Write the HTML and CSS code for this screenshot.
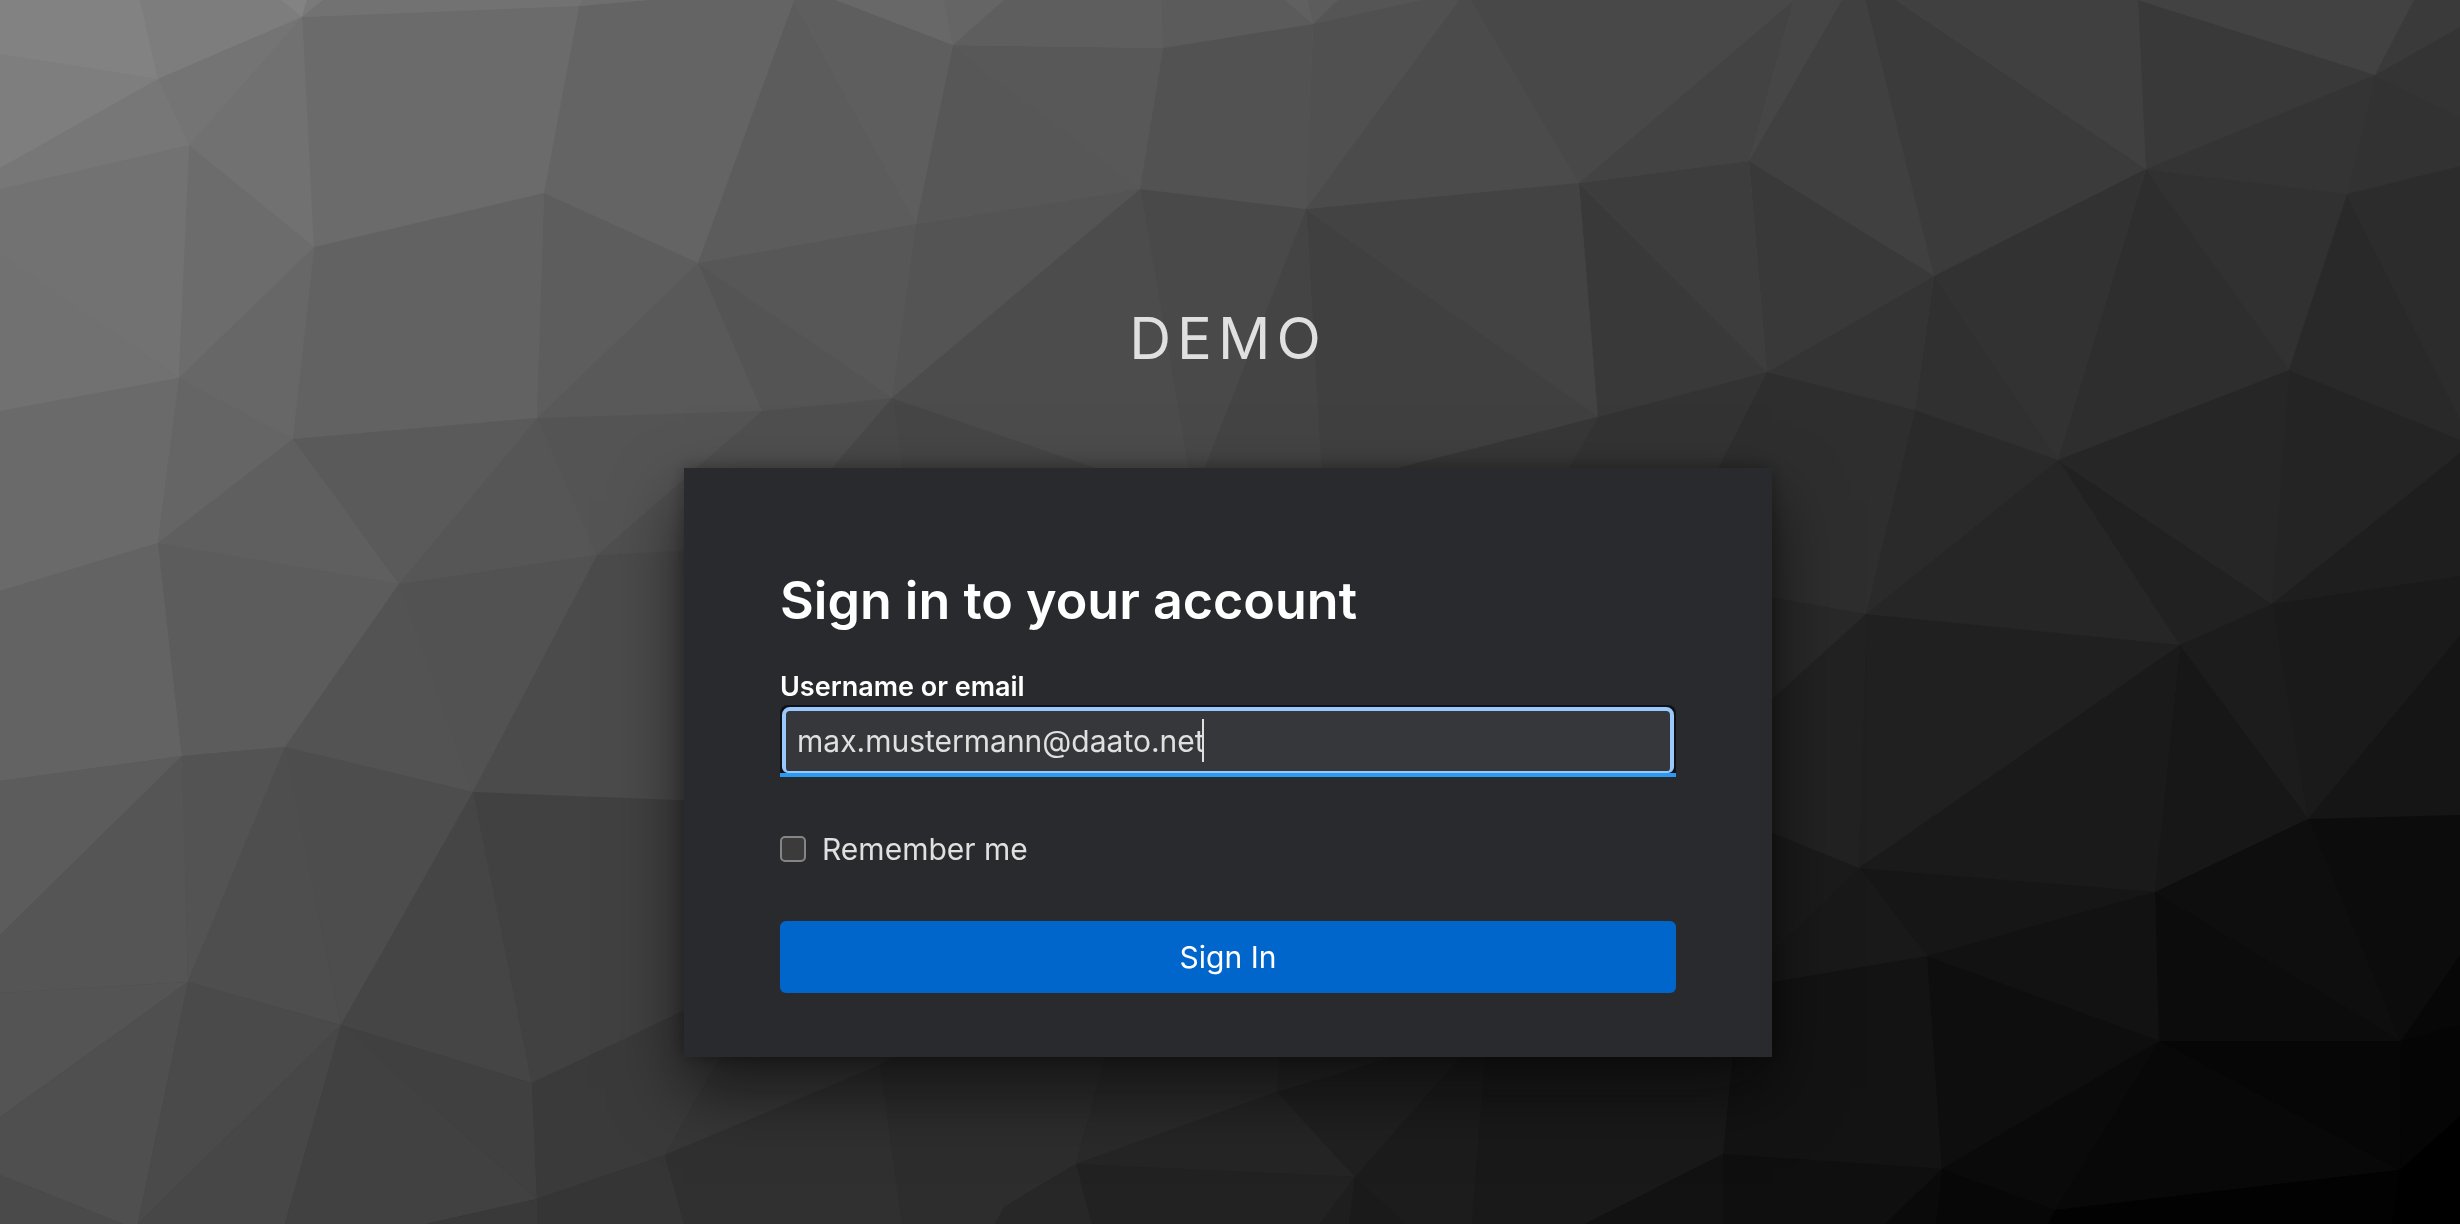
FILE: index.html
```html
<!DOCTYPE html>
<html lang="en">
<head>
    <meta charset="UTF-8">
    <meta name="viewport" content="width=device-width, initial-scale=1.0">
    <title>Sign in to DEMO</title>
    <link rel="stylesheet" href="styles.css">
</head>
<body>
    <!-- Low-poly backdrop -->
    <svg class="backdrop" viewBox="0 0 2460 1224" preserveAspectRatio="xMidYMid slice" aria-hidden="true">
        <defs>
            <linearGradient id="base" x1="0" y1="0" x2="1" y2="1">
                <stop offset="0" stop-color="#868686"/>
                <stop offset="0.5" stop-color="#424242"/>
                <stop offset="1" stop-color="#000000"/>
            </linearGradient>
        </defs>
        <rect width="2460" height="1224" fill="url(#base)"/>
        <!-- Top left -->
        <polygon fill="#828282" points="0,0 140,0 158,79 0,54"/>
        <polygon fill="#7d7d7d" points="140,0 281,0 302,17 158,79"/>
        <polygon fill="#838383" points="281,0 307,0 302,17"/>
        <polygon fill="#7a7a7a" points="307,0 323,0 302,17"/>
        <polygon fill="#7e7e7e" points="0,54 158,79 0,168"/>
        <polygon fill="#777777" points="0,168 158,79 189,145 0,189"/>
        <polygon fill="#747474" points="158,79 302,17 189,145"/>
        <polygon fill="#717171" points="302,17 314,247 189,145"/>
        <polygon fill="#727272" points="323,0 583,0 579,6 302,17"/>
        <polygon fill="#6e6e6e" points="583,0 649,0 579,6"/>
        <polygon fill="#6b6b6b" points="302,17 579,6 544,193 314,247"/>
        <polygon fill="#646464" points="579,6 649,0 794,0 698,263 544,193"/>
        <polygon fill="#727272" points="0,189 189,145 179,378 0,254"/>
        <polygon fill="#717171" points="0,254 179,378 0,411"/>
        <polygon fill="#6c6c6c" points="189,145 314,247 179,378"/>
        <polygon fill="#676767" points="314,247 293,439 179,378"/>
        <polygon fill="#626262" points="314,247 544,193 537,418 293,439"/>
        <polygon fill="#5d5d5d" points="544,193 698,263 537,418"/>
        <polygon fill="#5c5c5c" points="794,0 916,224 698,263"/>
        <polygon fill="#5e5e5e" points="794,0 836,0 953,45 916,224"/>
        <polygon fill="#595959" points="698,263 762,411 537,418"/>
        <polygon fill="#6a6a6a" points="0,411 179,378 158,543 0,591"/>
        <polygon fill="#656565" points="179,378 293,439 158,543"/>
        <polygon fill="#5f5f5f" points="293,439 399,584 158,543"/>
        <polygon fill="#5a5a5a" points="293,439 537,418 399,584"/>
        <polygon fill="#565656" points="537,418 597,555 399,584"/>
        <polygon fill="#545454" points="537,418 762,411 597,555"/>
        <!-- Top middle -->
        <polygon fill="#575757" points="698,263 916,224 892,398"/>
        <polygon fill="#545454" points="698,263 892,398 762,411"/>
        <polygon fill="#545454" points="916,224 1140,189 892,398"/>
        <polygon fill="#575757" points="916,224 953,45 1140,189"/>
        <polygon fill="#585858" points="953,45 1163,48 1140,189"/>
        <polygon fill="#4f4f4f" points="762,411 892,398 830,500 684,551 597,555"/>
        <polygon fill="#686868" points="836,0 944,0 953,45"/>
        <polygon fill="#656565" points="944,0 1004,0 953,45"/>
        <polygon fill="#5e5e5e" points="1004,0 1161,0 1163,48 953,45"/>
        <polygon fill="#5b5b5b" points="1161,0 1285,0 1313,24 1163,48"/>
        <polygon fill="#606060" points="1285,0 1308,0 1313,24"/>
        <polygon fill="#5c5c5c" points="1308,0 1338,0 1313,24"/>
        <polygon fill="#555555" points="1338,0 1421,0 1313,24"/>
        <polygon fill="#525252" points="1163,48 1313,24 1306,209 1140,189"/>
        <polygon fill="#505050" points="1313,24 1421,0 1459,0 1306,209"/>
        <polygon fill="#4b4b4b" points="1459,0 1470,0 1579,183 1306,209"/>
        <polygon fill="#484848" points="1470,0 1794,0 1579,183"/>
        <polygon fill="#4c4c4c" points="1140,189 1191,480 1130,480 892,398"/>
        <polygon fill="#494949" points="1140,189 1306,209 1200,480 1191,480"/>
        <polygon fill="#444444" points="1306,209 1322,480 1200,480"/>
        <polygon fill="#404040" points="1306,209 1598,417 1350,480 1322,480"/>
        <polygon fill="#434343" points="1306,209 1579,183 1598,417"/>
        <polygon fill="#484848" points="892,398 904,480 822,480"/>
        <polygon fill="#464646" points="892,398 1130,480 904,480"/>
        <polygon fill="#373737" points="1598,417 1562,480 1350,480"/>
        <!-- Top right -->
        <polygon fill="#434343" points="1579,183 1794,0 1749,161"/>
        <polygon fill="#464646" points="1794,0 1842,0 1749,161"/>
        <polygon fill="#404040" points="1842,0 1865,0 1934,276 1749,161"/>
        <polygon fill="#3b3b3b" points="1865,0 1896,0 2146,169 1934,276"/>
        <polygon fill="#404040" points="1896,0 2138,0 2146,169"/>
        <polygon fill="#393939" points="2138,0 2375,75 2146,169"/>
        <polygon fill="#424242" points="2138,0 2414,0 2375,75"/>
        <polygon fill="#3a3a3a" points="2414,0 2460,0 2460,27 2375,75"/>
        <polygon fill="#343434" points="2375,75 2460,27 2460,117"/>
        <polygon fill="#323232" points="2375,75 2460,117 2460,166 2347,194"/>
        <polygon fill="#343434" points="2375,75 2347,194 2146,169"/>
        <polygon fill="#313131" points="2146,169 2347,194 2289,370"/>
        <polygon fill="#292929" points="2347,194 2460,420 2460,440 2289,370"/>
        <polygon fill="#2c2c2c" points="2347,194 2460,166 2460,420"/>
        <polygon fill="#2e2e2e" points="2146,169 2289,370 2058,460"/>
        <polygon fill="#323232" points="2146,169 2058,460 1934,276"/>
        <polygon fill="#303030" points="1934,276 2058,460 1915,410"/>
        <polygon fill="#343434" points="1934,276 1915,410 1767,372"/>
        <polygon fill="#393939" points="1749,161 1934,276 1767,372"/>
        <polygon fill="#3d3d3d" points="1579,183 1749,161 1767,372"/>
        <polygon fill="#393939" points="1579,183 1767,372 1598,417"/>
        <polygon fill="#333333" points="1598,417 1767,372 1712,480 1562,480"/>
        <polygon fill="#2e2e2e" points="1767,372 1915,410 1866,614 1760,595 1712,480"/>
        <polygon fill="#2a2a2a" points="1915,410 2058,460 1866,614"/>
        <polygon fill="#262626" points="2058,460 2180,645 1866,614"/>
        <polygon fill="#212121" points="2058,460 2272,604 2180,645"/>
        <polygon fill="#262626" points="2058,460 2289,370 2272,604"/>
        <polygon fill="#242424" points="2289,370 2460,440 2460,453 2272,604"/>
        <polygon fill="#1e1e1e" points="2272,604 2460,453 2460,576"/>
        <!-- Bottom right -->
        <polygon fill="#1a1a1a" points="2272,604 2460,576 2460,635 2308,819"/>
        <polygon fill="#1c1c1c" points="2272,604 2308,819 2180,645"/>
        <polygon fill="#151515" points="2308,819 2460,635 2460,815"/>
        <polygon fill="#292929" points="1760,595 1866,614 1760,710"/>
        <polygon fill="#222222" points="1866,614 1859,868 1760,828 1760,710"/>
        <polygon fill="#202020" points="1866,614 2180,645 1859,868"/>
        <polygon fill="#1a1a1a" points="2180,645 2155,892 1859,868"/>
        <polygon fill="#171717" points="2180,645 2308,819 2155,892"/>
        <polygon fill="#161616" points="1859,868 2155,892 1927,956"/>
        <polygon fill="#1b1b1b" points="1859,868 1760,964 1760,828"/>
        <polygon fill="#191919" points="1859,868 1927,956 1760,984 1760,964"/>
        <polygon fill="#121212" points="1927,956 2155,892 2159,1041"/>
        <polygon fill="#131313" points="1927,956 1942,1169 1723,1154 1734,1040 1760,984"/>
        <polygon fill="#0e0e0e" points="1927,956 2159,1041 1942,1169"/>
        <polygon fill="#0c0c0c" points="2155,892 2401,1041 2159,1041"/>
        <polygon fill="#0e0e0e" points="2155,892 2308,819 2401,1041"/>
        <polygon fill="#0c0c0c" points="2308,819 2460,815 2460,955 2401,1041"/>
        <polygon fill="#070707" points="2401,1041 2460,955 2460,1025"/>
        <polygon fill="#050505" points="2401,1041 2460,1025 2460,1116 2400,1170"/>
        <polygon fill="#060606" points="2159,1041 2401,1041 2400,1170"/>
        <polygon fill="#080808" points="2159,1041 2400,1170 2055,1210"/>
        <polygon fill="#0a0a0a" points="2159,1041 2055,1210 1942,1169"/>
        <polygon fill="#0f0f0f" points="1942,1169 1885,1224 1723,1224 1723,1154"/>
        <polygon fill="#0a0a0a" points="1942,1169 1936,1224 1885,1224"/>
        <polygon fill="#070707" points="1942,1169 2055,1210 2048,1224 1936,1224"/>
        <polygon fill="#020202" points="2055,1210 2400,1170 2392,1224 2048,1224"/>
        <polygon fill="#000000" points="2400,1170 2460,1116 2460,1224 2392,1224"/>
        <!-- Bottom left -->
        <polygon fill="#636363" points="0,591 158,543 182,756 0,781"/>
        <polygon fill="#5c5c5c" points="158,543 399,584 285,747 182,756"/>
        <polygon fill="#535353" points="399,584 473,792 285,747"/>
        <polygon fill="#525252" points="399,584 597,555 473,792"/>
        <polygon fill="#4b4b4b" points="597,555 700,550 700,801 473,792"/>
        <polygon fill="#5c5c5c" points="0,781 182,756 0,935"/>
        <polygon fill="#555555" points="182,756 188,982 0,993 0,935"/>
        <polygon fill="#535353" points="182,756 285,747 188,982"/>
        <polygon fill="#4e4e4e" points="285,747 341,1025 188,982"/>
        <polygon fill="#4d4d4d" points="285,747 473,792 341,1025"/>
        <polygon fill="#454545" points="473,792 532,1083 341,1025"/>
        <polygon fill="#414141" points="473,792 700,801 700,1003 532,1083"/>
        <polygon fill="#545454" points="188,982 0,1117 0,993"/>
        <polygon fill="#4f4f4f" points="188,982 138,1224 123,1224 0,1175 0,1117"/>
        <polygon fill="#4a4a4a" points="0,1175 123,1224 0,1224"/>
        <polygon fill="#4a4a4a" points="188,982 341,1025 138,1224"/>
        <polygon fill="#474747" points="341,1025 285,1224 138,1224"/>
        <polygon fill="#414141" points="341,1025 537,1199 426,1224 285,1224"/>
        <polygon fill="#404040" points="341,1025 532,1083 537,1199"/>
        <polygon fill="#3a3a3a" points="532,1083 700,1003 730,1040 665,1155 537,1199"/>
        <polygon fill="#393939" points="537,1199 537,1224 426,1224"/>
        <polygon fill="#353535" points="537,1199 665,1155 684,1224 537,1224"/>
        <!-- Bottom middle -->
        <polygon fill="#373737" points="730,1040 900,1040 880,1065 665,1155"/>
        <polygon fill="#303030" points="665,1155 880,1065 902,1224 684,1224"/>
        <polygon fill="#2d2d2d" points="880,1065 930,1040 1110,1040 1076,1164 1004,1207 995,1224 902,1224"/>
        <polygon fill="#2a2a2a" points="1110,1040 1281,1040 1277,1092 1076,1164"/>
        <polygon fill="#252525" points="1277,1092 1355,1177 1076,1164"/>
        <polygon fill="#272727" points="1076,1164 1092,1224 995,1224 1004,1207"/>
        <polygon fill="#222222" points="1076,1164 1355,1177 1320,1224 1092,1224"/>
        <polygon fill="#262626" points="1281,1040 1440,1040 1277,1092"/>
        <polygon fill="#202020" points="1277,1092 1393,1057 1440,1040 1475,1040 1355,1177"/>
        <polygon fill="#1c1c1c" points="1475,1040 1486,1040 1472,1224 1406,1224 1355,1177"/>
        <polygon fill="#1e1e1e" points="1355,1177 1349,1224 1320,1224"/>
        <polygon fill="#1a1a1a" points="1355,1177 1406,1224 1349,1224"/>
        <polygon fill="#191919" points="1486,1040 1734,1040 1723,1154 1585,1224 1472,1224"/>
        <polygon fill="#121212" points="1723,1154 1723,1224 1585,1224"/>
    </svg>

    <div class="login">
        <header class="login-header">DEMO</header>
        <main class="login-card">
            <h1 class="login-title">Sign in to your account</h1>
            <form class="login-form">
                <label class="field-label" for="username">Username or email</label>
                <div class="field">
                    <input class="field-input" id="username" name="username" type="text" value="max.mustermann@daato.net" autocomplete="username" spellcheck="false">
                    <span class="caret"></span>
                </div>
                <div class="remember">
                    <input class="remember-box" id="rememberMe" name="rememberMe" type="checkbox">
                    <label for="rememberMe">Remember me</label>
                </div>
                <button class="submit" type="submit">Sign In</button>
            </form>
        </main>
    </div>
</body>
</html>
```
FILE: styles.css
```css
:root {
    --card-bg: #292a2d;
    --field-bg: #36373a;
    --text-color: #e0e0e0;
    --focus-color: #99c8ff;
    --active-color: #2b9af3;
    --primary-color: #0066cc;
}

* {
    margin: 0;
    padding: 0;
    box-sizing: border-box;
}

body {
    min-height: 100vh;
    overflow: hidden;
    background: #2c2c2c;
    color: var(--text-color);
    font-family: 'Inter', sans-serif;
    font-size: 30px;
    line-height: 48px;
}

.backdrop {
    position: fixed;
    inset: 0;
    width: 100%;
    height: 100%;
    z-index: -1;
}

.login {
    padding: 208px 52px 0 48px;
}

.login-header {
    padding: 96px 0;
    font-size: 58px;
    line-height: 68px;
    letter-spacing: 6px;
    text-align: center;
    text-transform: uppercase;
}

.login-card {
    max-width: 1088px;
    margin: 0 auto;
    padding: 96px 96px 64px;
    background: var(--card-bg);
    box-shadow: 0 32px 64px rgba(3, 3, 3, 0.6), 0 0 16px rgba(3, 3, 3, 0.3);
}

.login-title {
    margin-bottom: 30px;
    color: #ffffff;
    font-size: 52px;
    font-weight: 600;
    line-height: 74px;
}

.login-form {
    display: flex;
    flex-direction: column;
}

.field-label {
    color: #ffffff;
    font-size: 27px;
    font-weight: 600;
    line-height: 37px;
}

.field {
    position: relative;
    padding: 2px 2px 0;
    background: #101114;
    border-bottom: 4px solid var(--active-color);
    border-radius: 8px 8px 0 0;
}

.field-input {
    display: block;
    width: 100%;
    height: 66px;
    padding: 0 11px;
    border: 4px solid var(--focus-color);
    border-bottom-width: 2px;
    border-radius: 8px 8px 6px 6px;
    outline: none;
    background: var(--field-bg);
    color: var(--text-color);
    font: inherit;
}

/* text cursor, held still after the last letter */
.caret {
    position: absolute;
    top: 14px;
    left: 422px;
    width: 2px;
    height: 43px;
    background: var(--text-color);
}

.remember {
    display: flex;
    align-items: center;
    gap: 16px;
    margin: 48px 0;
}

.remember-box {
    appearance: none;
    width: 26px;
    height: 26px;
    border: 2px solid #858585;
    border-radius: 5px;
    background: #3b3b3b;
}

.submit {
    height: 72px;
    border: none;
    border-radius: 6px;
    background: var(--primary-color);
    color: #ffffff;
    font: inherit;
    cursor: pointer;
}
```
